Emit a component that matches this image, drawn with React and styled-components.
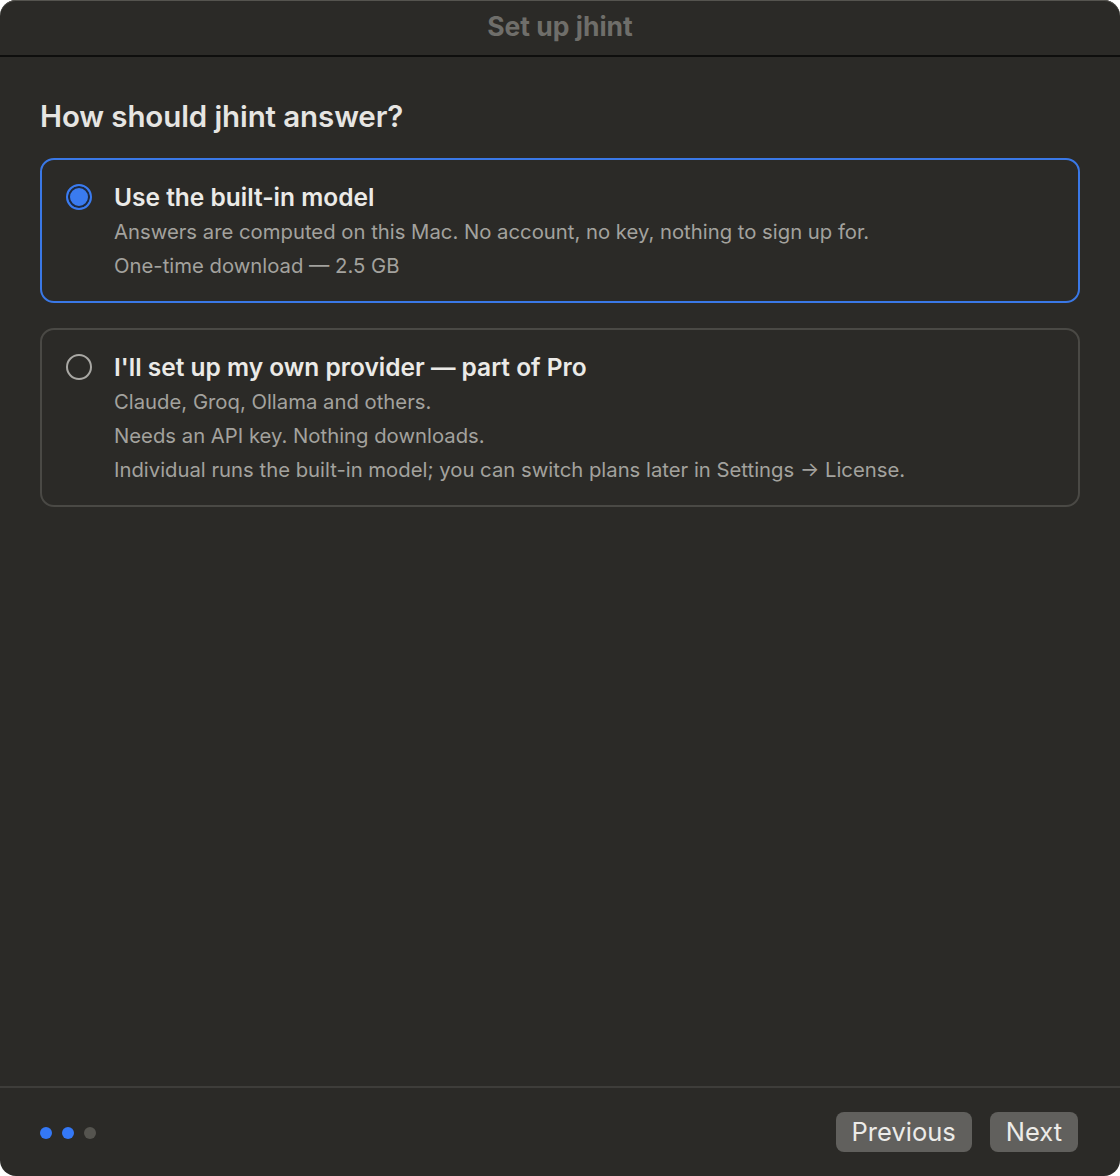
import styled, { createGlobalStyle } from "styled-components";

const Global = createGlobalStyle`
  html, body {
    margin: 0;
    padding: 0;
    background: #ffffff;
  }
  * { box-sizing: border-box; }
`;

const options = [
  {
    id: "builtin",
    title: "Use the built-in model",
    lines: [
      "Answers are computed on this Mac. No account, no key, nothing to sign up for.",
      "One-time download — 2.5 GB",
    ],
  },
  {
    id: "own",
    title: "I'll set up my own provider — part of Pro",
    lines: [
      "Claude, Groq, Ollama and others.",
      "Needs an API key. Nothing downloads.",
      "Individual runs the built-in model; you can switch plans later in Settings → License.",
    ],
  },
];

export default function App() {
  const selected = "builtin";
  const step = 2;

  return (
    <>
      <Global />
      <Window>
        <TitleBar>Set up jhint</TitleBar>
        <Content>
          <Heading>How should jhint answer?</Heading>
          <OptionList>
            {options.map((opt) => (
              <Card key={opt.id} $active={opt.id === selected}>
                <Radio $active={opt.id === selected} />
                <CardText>
                  <CardTitle>{opt.title}</CardTitle>
                  {opt.lines.map((l, i) => (
                    <CardLine key={i}>{l}</CardLine>
                  ))}
                </CardText>
              </Card>
            ))}
          </OptionList>
        </Content>
        <Footer>
          <Dots>
            {[0, 1, 2].map((i) => (
              <Dot key={i} $on={i < step} />
            ))}
          </Dots>
          <Buttons>
            <Button>Previous</Button>
            <Button>Next</Button>
          </Buttons>
        </Footer>
      </Window>
    </>
  );
}

const Window = styled.div`
  width: 1120px;
  height: 1176px;
  background: #2b2a27;
  border-radius: 16px;
  overflow: hidden;
  display: flex;
  flex-direction: column;
  box-shadow: inset 0 1px 0 #55544f;
  font-family: Inter, "Noto Sans", sans-serif;
`;

const TitleBar = styled.div`
  height: 57px;
  flex-shrink: 0;
  display: flex;
  align-items: center;
  justify-content: center;
  border-bottom: 2px solid #0e0e0d;
  color: #6f6e6a;
  font-size: 26.5px;
  font-weight: 700;
  padding-bottom: 3px;
`;

const Content = styled.div`
  flex: 1;
  padding: 40px 40px 0 40px;
`;

const Heading = styled.h1`
  margin: 0 0 23px 0;
  color: #e6e5e2;
  font-size: 29.5px;
  font-weight: 600;
  line-height: 38px;
  letter-spacing: -0.1px;
`;

const OptionList = styled.div`
  display: flex;
  flex-direction: column;
  gap: 25px;
`;

const Card = styled.div`
  display: flex;
  align-items: flex-start;
  gap: 22px;
  border: 2px solid ${(p) => (p.$active ? "#3a78e6" : "#4a4945")};
  border-radius: 14px;
  padding: 21px 24px 18px 24px;
`;

const Radio = styled.div`
  width: 26px;
  height: 26px;
  margin-top: 3px;
  border-radius: 50%;
  flex-shrink: 0;
  border: 2px solid ${(p) => (p.$active ? "#3a7bf0" : "#a9a8a4")};
  background: ${(p) => (p.$active ? "#3a7bf0" : "transparent")};
  box-shadow: ${(p) => (p.$active ? "inset 0 0 0 2px #1e2a40" : "none")};
`;

const CardText = styled.div`
  display: flex;
  flex-direction: column;
`;

const CardTitle = styled.div`
  color: #ebeae7;
  font-size: 24.5px;
  font-weight: 600;
  line-height: 32px;
  margin-bottom: 2px;
`;

const CardLine = styled.div`
  color: #a3a29e;
  font-size: 20.3px;
  line-height: 34px;
`;

const Footer = styled.div`
  height: 90px;
  flex-shrink: 0;
  border-top: 2px solid #3e3d3a;
  display: flex;
  align-items: center;
  justify-content: space-between;
  padding: 0 42px 0 40px;
`;

const Dots = styled.div`
  display: flex;
  gap: 10px;
  margin-top: 2px;
`;

const Dot = styled.div`
  width: 12px;
  height: 12px;
  border-radius: 50%;
  background: ${(p) => (p.$on ? "#3478f6" : "#55544f")};
`;

const Buttons = styled.div`
  display: flex;
  gap: 18px;
`;

const Button = styled.button`
  height: 40px;
  padding: 0 16px;
  border: none;
  border-radius: 8px;
  background: #61605d;
  color: #ecebe8;
  font-family: Inter, "Noto Sans", sans-serif;
  font-size: 25.5px;
  line-height: 40px;
  cursor: pointer;
`;
